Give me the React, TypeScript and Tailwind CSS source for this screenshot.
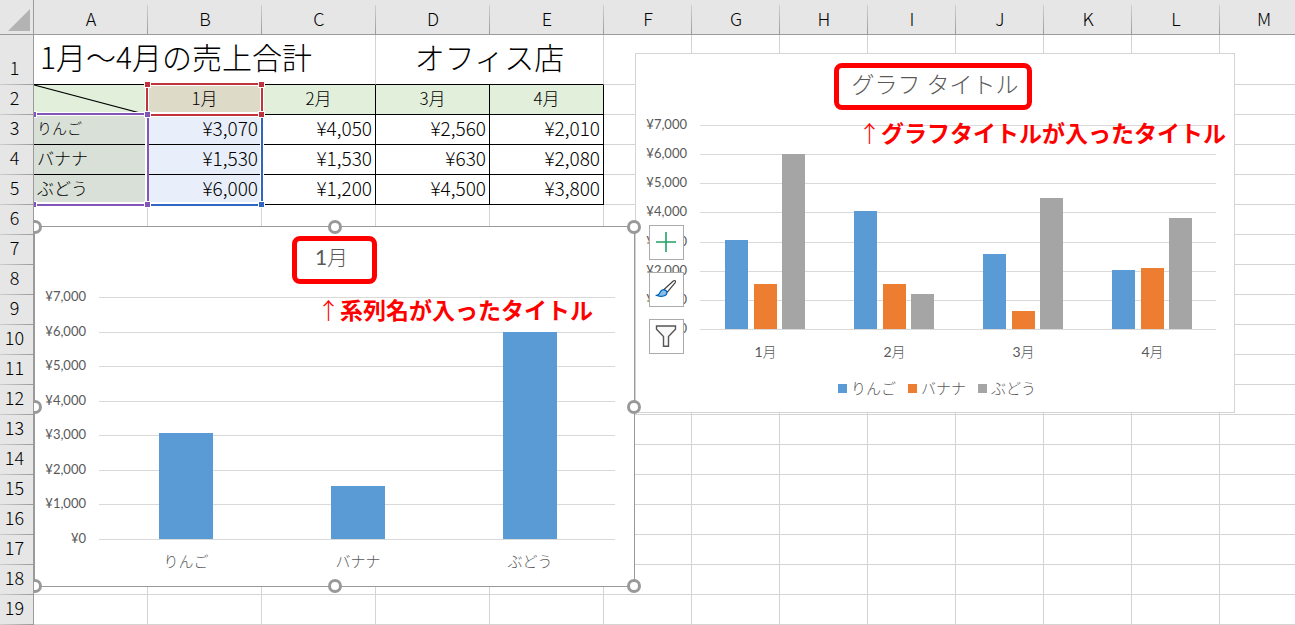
import React from "react";

type Series = { name: string; color: string; values: number[] };

const COLUMNS = ["A", "B", "C", "D", "E", "F", "G", "H", "I", "J", "K", "L", "M"];
const MONTHS = ["1月", "2月", "3月", "4月"];
const PRODUCTS: Series[] = [
  { name: "りんご", color: "#5b9bd5", values: [3070, 4050, 2560, 2010] },
  { name: "バナナ", color: "#ed7d31", values: [1530, 1530, 630, 2080] },
  { name: "ぶどう", color: "#a5a5a5", values: [6000, 1200, 4500, 3800] },
];

const yen = (n: number) => "¥" + n.toLocaleString("en-US");

type PlotProps = {
  label: string;
  categories: string[];
  series: Series[];
  height: number;
  left: number;
  right: number;
  top: number;
  bottom: number;
  barWidth: number;
  barPitch: number;
  labelGap: number;
  categorySize: number;
};

function Plot(p: PlotProps) {
  const max = 7000;
  const y = (v: number) => Math.round(p.bottom - (v / max) * (p.bottom - p.top));
  const slot = (p.right - p.left) / p.categories.length;
  const ticks = [7000, 6000, 5000, 4000, 3000, 2000, 1000, 0];
  return (
    <svg
      role="img"
      aria-label={p.label}
      viewBox={`0 0 598 ${p.height}`}
      width="598"
      height={p.height}
      className="block fill-[#595959] font-['Lato','Noto_Sans_CJK_JP',sans-serif]"
    >
      {ticks.map((t) => (
        <g key={t}>
          <rect x={p.left} y={y(t)} width={p.right - p.left} height="1" fill="#d9d9d9" />
          <text x={p.left - 13} y={y(t) + 4} textAnchor="end" fontSize="13">
            {yen(t)}
          </text>
        </g>
      ))}
      {p.categories.map((c, i) => {
        const mid = p.left + slot * (i + 0.5);
        const start = mid - ((p.series.length - 1) * p.barPitch + p.barWidth) / 2;
        const digits = c.match(/^\d*/)?.[0] ?? "";
        return (
          <g key={c}>
            {p.series.map((s, j) => (
              <rect
                key={s.name}
                x={Math.floor(start + j * p.barPitch) + 1}
                y={y(s.values[i])}
                width={p.barWidth}
                height={p.bottom - y(s.values[i])}
                fill={s.color}
              />
            ))}
            <text
              x={mid + 1}
              y={p.bottom + p.labelGap}
              textAnchor="middle"
              fontSize={p.categorySize}
              className="font-light"
            >
              <tspan className="font-normal">{digits}</tspan>
              {c.slice(digits.length)}
            </text>
          </g>
        );
      })}
    </svg>
  );
}

function SheetTable() {
  const grid = "border-r border-b border-[#d4d4d4]";
  const black = "border-r border-b border-black";
  const rowHead =
    "border-r border-[#9b9b9b] bg-[#e6e6e6] bg-[linear-gradient(to_right,#cfcfcf,#9b9b9b)] bg-[length:100%_1px] bg-bottom bg-no-repeat p-0 pr-1 pb-1.5 text-center align-bottom font-light";
  return (
    <table className="w-max table-fixed border-separate border-spacing-0 text-lg leading-6 font-light">
      <colgroup>
        <col className="w-[34px]" />
        {COLUMNS.map((c, i) => (
          <col key={c} className={i < 5 ? "w-[114px]" : "w-[88px]"} />
        ))}
      </colgroup>
      <thead>
        <tr className="h-[35px]">
          <th className="border-r border-b border-[#9b9b9b] bg-[#e6e6e6] p-0">
            <button type="button" aria-label="すべて選択" className="block h-[34px] w-full">
              <svg viewBox="0 0 33 34" width="33" height="34" className="block">
                <path d="M30 9v22H8z" fill="#b3b3b3" />
              </svg>
            </button>
          </th>
          {COLUMNS.map((c) => (
            <th
              key={c}
              scope="col"
              className="border-b border-[#9b9b9b] bg-[#e6e6e6] bg-[linear-gradient(to_bottom,#cfcfcf,#9b9b9b)] bg-[length:1px_29px] bg-right-bottom bg-no-repeat p-0 pt-0.5 text-center font-light"
            >
              {c}
            </th>
          ))}
        </tr>
      </thead>
      <tbody>
        <tr className="h-[50px]">
          <th scope="row" className={rowHead}>1</th>
          <td colSpan={3} className="border-r border-b border-r-[#d4d4d4] border-b-black p-0 pb-2 pl-1.5 text-3xl leading-none">
            1月～4月の売上合計
          </td>
          <td colSpan={2} className="border-r border-b border-r-[#d4d4d4] border-b-black p-0 pb-2 text-center text-3xl leading-none">
            オフィス店
          </td>
          {COLUMNS.slice(5).map((c) => (
            <td key={c} className={grid} />
          ))}
        </tr>
        <tr className="h-[30px]">
          <th scope="row" className={rowHead}>2</th>
          <td className="relative border-b border-black bg-[#e2efda] p-0">
            <svg
              aria-hidden="true"
              viewBox="0 0 114 29"
              preserveAspectRatio="none"
              className="absolute inset-0 h-full w-full"
            >
              <path d="M0 0L110 29" stroke="#000" strokeWidth="1.2" />
            </svg>
          </td>
          {MONTHS.map((m, i) => (
            <td key={m} className={`${black} ${i === 0 ? "bg-[#dedac8]" : "bg-[#e2efda]"} p-0 pb-1 text-center text-[17px]`}>
              {m}
            </td>
          ))}
          {COLUMNS.slice(5).map((c) => (
            <td key={c} className={grid} />
          ))}
        </tr>
        {PRODUCTS.map((p, r) => (
          <tr key={p.name} className="h-[30px]">
            <th scope="row" className={rowHead}>{r + 3}</th>
            <td className={`${black} bg-[#d8e0d7] p-0 pb-1 pl-[3px] ${r === 0 ? "text-[15px]" : "text-[17px]"}`}>{p.name}</td>
            {p.values.map((v, i) => (
              <td key={i} className={`${black} ${i === 0 ? "bg-[#e8effa]" : "bg-white"} p-0 pr-[3px] pb-1 text-right text-[19px]`}>
                {yen(v)}
              </td>
            ))}
            {COLUMNS.slice(5).map((c) => (
              <td key={c} className={grid} />
            ))}
          </tr>
        ))}
        {Array.from({ length: 14 }, (_, i) => i + 6).map((n) => (
          <tr key={n} className="h-[30px]">
            <th scope="row" className={rowHead}>{n}</th>
            {COLUMNS.map((c) => (
              <td key={c} className={grid} />
            ))}
          </tr>
        ))}
      </tbody>
    </table>
  );
}

/* Coloured outlines marking the ranges that feed the selected chart. */
function RangeMarks() {
  const handles: [number, number, string][] = [
    [113, 5, "#c0323c"],
    [227, 5, "#c0323c"],
    [227, 35, "#c0323c"],
    [227, 125, "#2f66c4"],
    [-1, 35, "#8256b8"],
    [113, 35, "#8256b8"],
    [-1, 125, "#8256b8"],
    [113, 125, "#8256b8"],
  ];
  return (
    <svg
      aria-hidden="true"
      viewBox="0 0 232 130"
      width="232"
      height="130"
      shapeRendering="crispEdges"
      className="pointer-events-none absolute top-[79px] left-[34px]"
      fill="none"
    >
      <rect x="113" y="5" width="115" height="31" stroke="#fff" strokeWidth="4" />
      <rect x="113" y="35" width="115" height="90" stroke="#fff" strokeWidth="4" />
      <path d="M0 35h113M0 125h113" stroke="#fff" strokeWidth="4" />
      <path d="M114 126h114V35" stroke="#2f66c4" strokeWidth="2" />
      <rect x="113" y="5" width="115" height="31" stroke="#c0323c" strokeWidth="2" />
      <path d="M0 35h114V126H0" stroke="#8256b8" strokeWidth="2" />
      {handles.map(([x, y, c]) => (
        <g key={`${x}-${y}`}>
          <rect x={x - 3} y={y - 3} width="7" height="7" fill="#fff" />
          <rect x={x - 2} y={y - 2} width="5" height="5" fill={c} />
        </g>
      ))}
    </svg>
  );
}

/* Eight resize knobs round the frame of the selected chart. */
function ResizeKnobs() {
  const knob = "size-[14px] rounded-full border-[3px] border-[#999999] bg-white";
  return (
    <div className="pointer-events-none absolute -inset-[7px] flex flex-col justify-between">
      {[0, 1, 2].map((row) => (
        <div key={row} className="flex justify-between">
          <span className={knob} />
          {row !== 1 && <span className={knob} />}
          <span className={knob} />
        </div>
      ))}
    </div>
  );
}

const titleBox =
  "mx-auto flex w-fit items-center justify-center rounded-lg border-[5px] border-[#ff0000] pb-1.5 text-[#595959] font-light font-['Lato','Noto_Sans_CJK_JP',sans-serif]";
const note =
  "absolute flex items-center whitespace-nowrap text-[23px] leading-8 font-bold text-[#ff0000]";
const tool =
  "flex size-[35px] items-center justify-center border border-[#ababab] bg-white pr-0.5 pb-0.5";

export default function App() {
  return (
    <main className="relative w-full overflow-hidden bg-white text-black font-['Noto_Sans_CJK_JP',sans-serif]">
      <SheetTable />
      <RangeMarks />

      <figure className="absolute top-[53px] left-[635px] w-[600px] border border-[#d4d4d4] bg-white pt-[9px] pr-1 pb-[14px]">
        <figcaption className={`${titleBox} h-[47px] pr-2 pl-3 text-[23px] leading-8`}>グラフ タイトル</figcaption>
        <Plot
          label="月別の売上"
          categories={MONTHS}
          series={PRODUCTS}
          height={268}
          left={64}
          right={580}
          top={15}
          bottom={219}
          barWidth={23}
          barPitch={28.5}
          labelGap={28}
          categorySize={14}
        />
        <ul className="flex justify-center gap-3 pl-2 text-[15px] leading-5 font-light text-[#595959]">
          {PRODUCTS.map((p) => (
            <li key={p.name} className="flex items-center gap-1">
              <svg aria-hidden="true" width="9" height="9" className="block">
                <rect width="9" height="9" fill={p.color} />
              </svg>
              {p.name}
            </li>
          ))}
        </ul>
        <p className={`${note} top-[62px] left-[222px]`}>
          <span className="font-light">↑</span>グラフタイトルが入ったタイトル
        </p>
      </figure>

      <div className="absolute top-[219px] left-[34px] overflow-hidden pt-[7px] pr-2 pb-2">
        <figure className="relative w-[601px] border border-[#999999] bg-white pt-[9px]">
          <figcaption className={`${titleBox} h-12 pr-6 pl-[18px] text-[21px] leading-8`}>
            <span className="font-normal">1</span>月
          </figcaption>
          <Plot
            label="1月の売上"
            categories={PRODUCTS.map((p) => p.name)}
            series={[{ name: "1月", color: "#5b9bd5", values: PRODUCTS.map((p) => p.values[0]) }]}
            height={302}
            left={64}
            right={580}
            top={13}
            bottom={255}
            barWidth={54}
            barPitch={54}
            labelGap={28}
            categorySize={15}
          />
          <p className={`${note} top-[66px] left-[282px]`}>
            <span className="font-light">↑</span>系列名が入ったタイトル
          </p>
          <ResizeKnobs />
        </figure>
      </div>

      <div className="absolute top-[225px] left-[649px] flex flex-col gap-3">
        <button type="button" aria-label="グラフ要素" className={tool}>
          <svg viewBox="0 0 22 22" width="22" height="22" fill="none">
            <path d="M11 1v20M1 11h20" stroke="#21a366" strokeWidth="1.6" />
          </svg>
        </button>
        <button type="button" aria-label="グラフ スタイル" className={tool}>
          <svg viewBox="0 0 22 22" width="22" height="22" strokeLinejoin="round">
            <path d="M9 11.5L18 3.2c1.6-1.4 3.4-.4 2 1.6L12.3 14.2z" fill="#fff" stroke="#444" strokeWidth="1.2" />
            <path d="M1 17.3c3 .4 3.4-1.300 4.2-3.200 1-2.300 3.500-3 5.300-1.800 1.900 1.300 1.800 3.500.3 4.700-2.300 1.800-6.800 1.800-9.800.3z" fill="#83beec" stroke="#0063b1" strokeWidth="1.2" />
          </svg>
        </button>
        <button type="button" aria-label="グラフ フィルター" className={tool}>
          <svg viewBox="0 0 22 22" width="22" height="22" fill="#f8f8f8" strokeLinejoin="miter">
            <path d="M1.500 1h19v3.200L13.500 11.500V21.200h-5V11.500L1.500 4.200z" stroke="#555" strokeWidth="1.4" />
          </svg>
        </button>
      </div>
    </main>
  );
}
